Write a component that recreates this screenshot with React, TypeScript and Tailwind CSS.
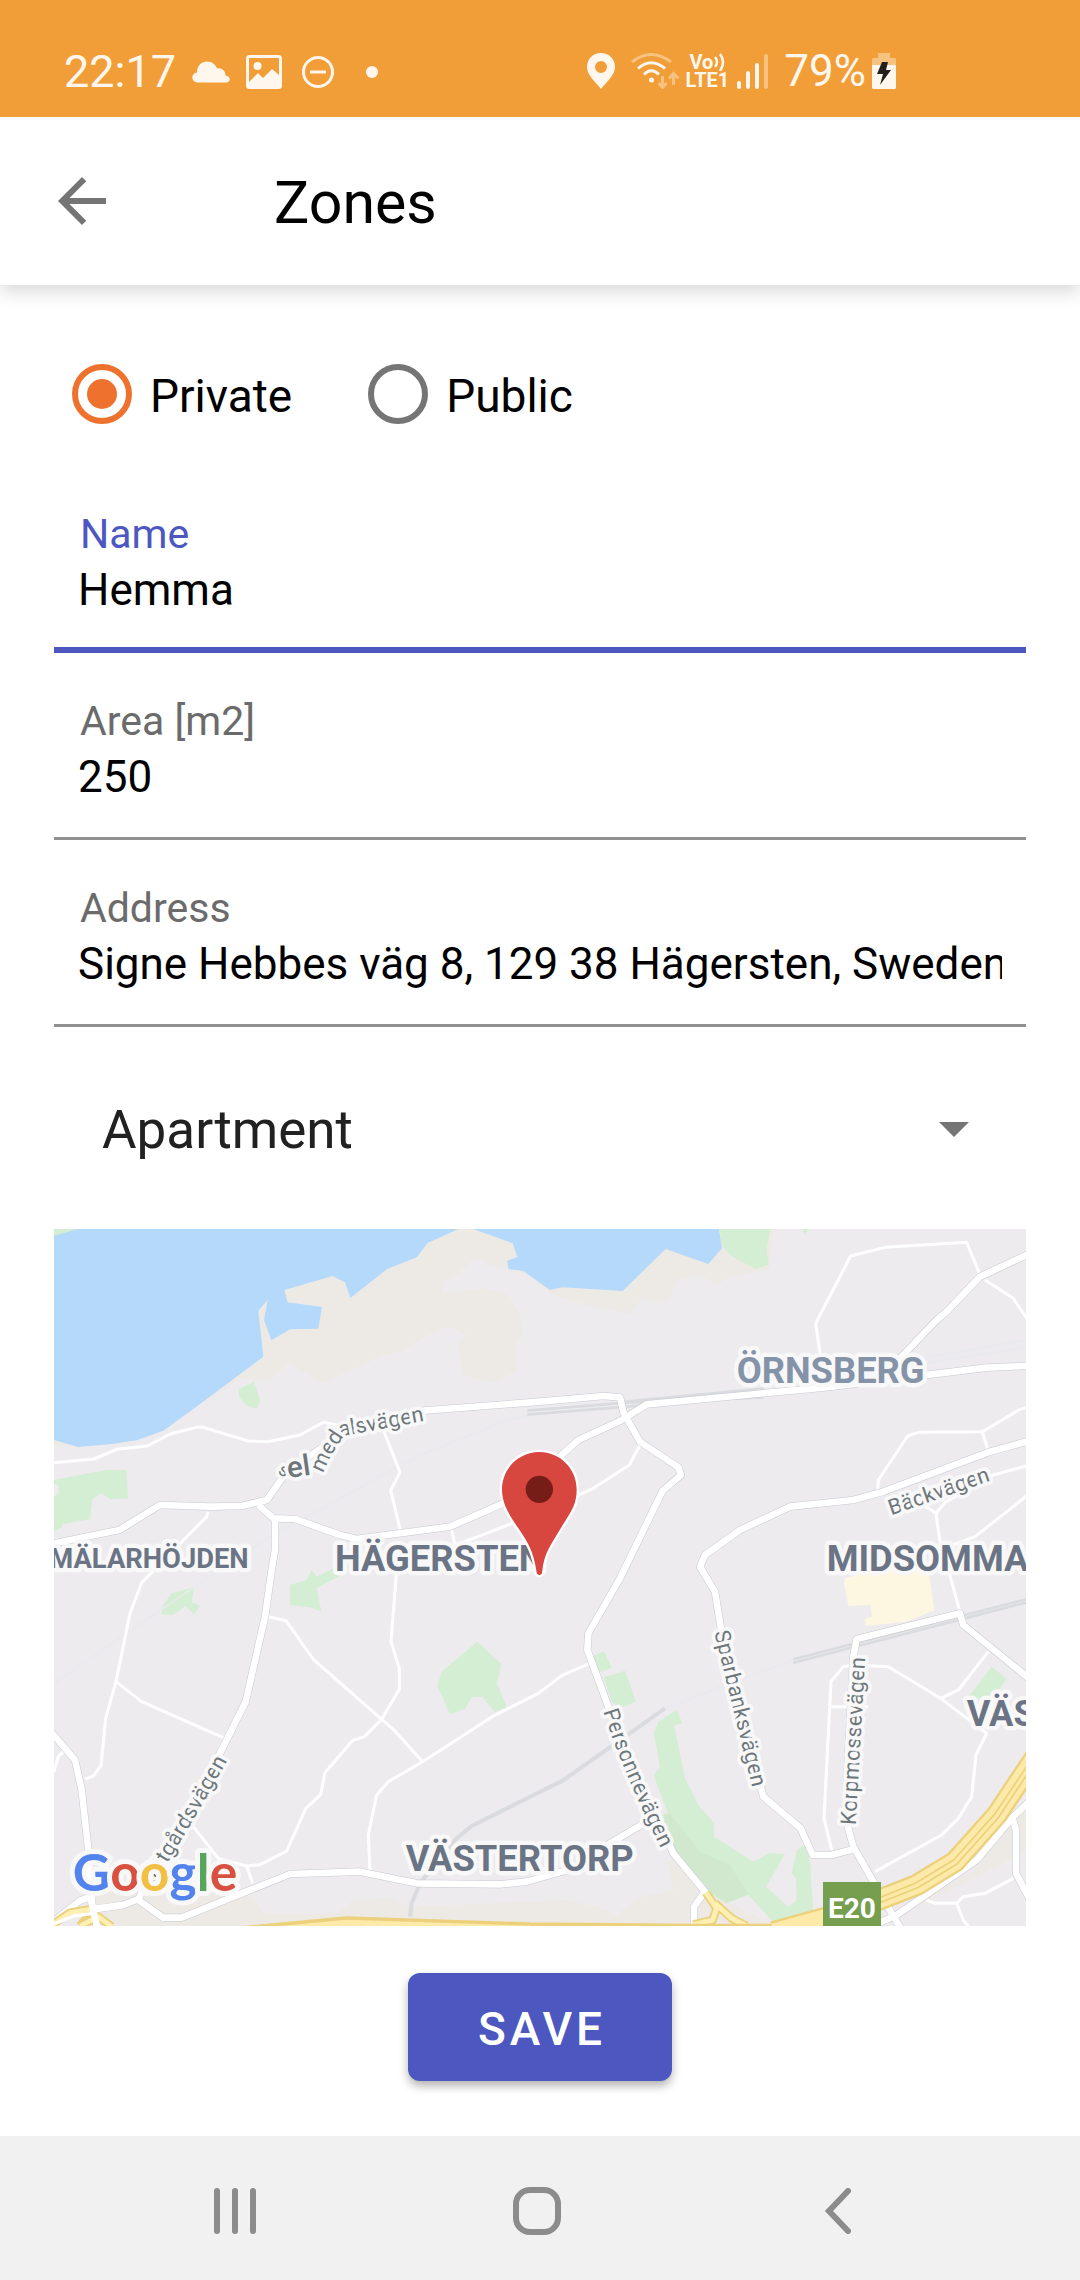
import { useState } from "react";
import type { ReactNode } from "react";

const MAJOR_ROADS = [
  "42,970 238,930 360,855 510,860 605,858 680,840 740,755 850,680 950,610 1150,572 1500,545 1690,528 1740,532 1750,575 1760,595",
  "655,855 700,895 765,897 900,945 950,957 1230,920 1390,850 1500,775 1565,705 1615,660 1740,603 1820,553 2350,503 2840,443 2970,437",
  "705,895 705,990 695,1050 675,1190 617,1445 540,1600 310,2005 295,2040 370,2093 425,2093 750,1962 960,1955 1130,1990 1380,1993 1460,1985 1590,1948 1710,1870 1820,1805",
  "1760,595 1800,665 1915,742 1923,765 1868,812 1740,1075 1645,1240 1642,1290 1705,1460 1900,1900 1995,2015 1962,2060 1962,2130",
  "30,1532 105,1620 125,1710 145,1890 155,2050 172,2130",
  "30,2112 120,2042 158,2028",
  "160,2068 250,2055 300,2035",
  "2970,100 2820,170 2720,275 2690,300 2575,420 2520,488",
  "2970,662 2850,695 2530,815 2440,840 2250,860 2100,930 1995,1005 1980,1040 2025,1115 2045,1240 2170,1730 2282,1825 2318,1905 2375,1905 2440,1888",
  "2970,1378 2770,1215 2760,1180 2450,1257 2440,1310 2415,1790 2440,1880 2520,2020 2585,2130",
  "2480,2125 2570,2085 2810,1920 2920,1790 2970,1742",
  "2915,1785 2928,1830 2928,1960 2970,2040",
];

const MINOR_ROADS = [
  "42,728 162,717 230,688 322,678 390,642 470,622 490,622 625,663 685,665 780,645 850,607 890,615",
  "1030,630 1080,757 1052,812 1082,935",
  "1235,930 1245,975 1300,955 1430,905",
  "505,875 500,890 305,1088 270,1180 228,1385 197,1495 183,1637 160,1668 135,1678",
  "228,1385 305,1445 555,1555",
  "685,1190 738,1202 820,1318 1025,1498 1060,1528 1148,1625",
  "1070,1050 1053,1265 1078,1345 1078,1408 1025,1498 973,1550 937,1562 855,1658 842,1724 797,1766 740,1893 660,1934 620,1938 535,1915 460,1820",
  "620,1938 638,1990",
  "1645,1332 1565,1367 1495,1420 1360,1488 1148,1625 1045,1685 1010,1725 985,1845 990,1955",
  "42,1655 55,1610 75,1590",
  "2340,400 2327,310 2432,108 2535,82 2780,67 2820,165",
  "2835,180 2920,235 2970,310",
  "2513,815 2515,780 2603,648 2635,637 2827,635 2940,568 2970,560",
  "2827,635 2845,695",
  "2620,835 2688,880 2702,980 2728,1060 2760,1175",
  "2688,880 2715,847 2860,765 2970,735",
  "2700,990 2805,950 2970,820",
  "1800,675 1768,735 1660,805 1600,832",
  "2375,1890 2352,1795 2373,1385 2410,1340 2440,1335 2545,1340 2702,1435 2840,1540 2808,1605 2795,1730 2755,1795 2705,1845 2505,1955",
  "2702,1435 2755,1410 2845,1295",
  "2370,1460 2485,1460",
  "2660,2040 2685,2050 2750,2050 2770,2030 2835,2020 2920,1975",
  "2750,2050 2770,2100 2790,2125",
];

const ROAD_LABELS = [
  { id: "slattgard", text: "Slättgårdsvägen", d: "M322 2024 Q438 1845 574 1600" },
  { id: "backvagen", text: "Bäckvägen", d: "M2554 886 L2880 772" },
  { id: "sparbank", text: "Sparbanksvägen", d: "M2023 1237 L2146 1740" },
  { id: "personne", text: "Personnevägen", d: "M1690 1474 Q1745 1650 1880 1920" },
  { id: "korpmosse", text: "Korpmossevägen", d: "M2447 1816 L2478 1270" },
  { id: "dalsvagen", text: "alsvägen", d: "M900 650 L1190 596" },
  { id: "selmed", text: "med", d: "M850 760 Q868 705 935 615" },
];

function RoadLabels() {
  return (
    <g fontSize="65" fill="#6d7679" stroke="#f8f8f9" strokeWidth="22" strokeLinejoin="round" paintOrder="stroke">
      {ROAD_LABELS.map((l) => (
        <g key={l.id}>
          <path id={l.id} d={l.d} fill="none" stroke="none" />
          <text>
            <textPath href={`#${l.id}`}>{l.text}</textPath>
          </text>
        </g>
      ))}
      <text fontSize="54" transform="translate(712 760) rotate(28)">s</text>
      <text fontSize="88" fontWeight="500" transform="translate(745 774) rotate(-8)">el</text>
    </g>
  );
}

function ZoneMap() {
  return (
    <svg
      role="img"
      aria-label="Map of Hägersten"
      viewBox="42 27 2916 2091"
      preserveAspectRatio="xMidYMid slice"
      className="block h-[697px] w-full bg-[#edebee]"
      fontFamily="Roboto, sans-serif"
    >
      <path
        fill="#edeae5"
        d="M480 552 L600 475 L690 480 L745 430 L850 490 L1030 405 L1080 395 L1200 325 L1240 325 L1278 345 L1252 380 L1270 465 L1350 488 L1428 455 L1430 370 L1448 340 L1440 280 L1405 225 L1330 205 L1205 220 L1210 185 L1250 165 L1305 115 L1350 135 L1405 147 L1470 168 L1530 222 L1650 258 L1770 283 L1810 230 L1860 252 L1890 235 L1910 182 L1980 165 L2030 195 L2060 175 L2186 148 L2200 27 L42 27 L42 675 L115 684 L370 632 Z"
      />
      <g fill="#b4d9fb">
        <path d="M42 660 L115 681 L210 673 L290 661 L370 632 L480 552 L670 410 L655 272 L683 240 L672 300 L694 361 L750 328 L835 326 L846 261 L743 247 L733 210 L878 168 L915 187 L931 234 L1040 148 L1130 112 L1163 69 L1255 27 L42 27 Z" />
        <path d="M1300 27 L1418 70 L1432 111 L1402 122 L1405 147 L1450 153 L1530 210 L1566 202 L1748 213 L1877 87 L2005 132 L2046 85 L2037 27 Z" />
      </g>
      <g fill="#edeae5">
        <path d="M150 2035 L230 2010 L330 2012 L640 2030 L670 2080 L890 2080 L940 2040 L1060 2035 L1110 2060 L1580 2040 L1670 2060 L1730 2085 L1790 2035 L1900 2010 L1885 1930 L1910 1890 L2070 2050 L2205 2118 L200 2118 Z" />
        <path d="M1860 1790 L1895 1755 L1900 1880 L1870 1860 Z" />
        <path d="M2970 1735 L2880 1850 L2800 1950 L2700 2010 L2570 2090 L2970 1890 Z" />
      </g>
      <g fill="#d3eed2">
        <path d="M42 27 L115 27 L42 47 Z" />
        <path d="M2037 27 L2190 27 L2180 90 L2186 134 L2146 147 L2070 105 L2046 75 Z" />
        <path d="M2287 27 L2305 27 L2295 43 Z" />
        <path d="M597 508 L642 485 L660 540 L650 567 L620 556 L597 530 Z" />
        <path d="M42 780 L200 750 L260 750 L264 835 L210 838 L185 820 L157 838 L150 898 L68 912 L66 922 L42 935 L42 832 L57 818 L55 795 L42 792 Z" />
        <path d="M370 1155 L395 1120 L462 1102 L455 1145 L480 1158 L462 1182 L436 1158 L400 1185 L363 1182 Z" />
        <path d="M750 1095 L800 1080 L815 1050 L830 1070 L880 1045 L915 1050 L895 1070 L830 1105 L844 1175 L810 1162 L750 1155 Z" />
        <path d="M1312 1265 L1384 1333 L1370 1390 L1400 1460 L1365 1477 L1327 1431 L1295 1431 L1275 1467 L1230 1482 L1192 1397 L1205 1355 Z" />
        <path d="M1660 1308 L1692 1294 L1716 1343 L1680 1356 Z" />
        <path d="M1692 1372 L1755 1352 L1788 1445 L1740 1465 L1715 1445 Z" />
        <path d="M1910 1470 L1927 1510 L1902 1515 L1935 1675 L1975 1755 L2022 1810 L2022 1850 L2140 1925 L2188 1900 L2235 1903 L2178 2000 L2245 2060 L2270 2040 L2268 1975 L2255 1960 L2270 1890 L2295 1875 L2310 1925 L2320 2080 L2235 2106 L2205 2112 L2125 2025 L2060 2050 L1990 2010 L1900 1890 L1865 1785 L1885 1780 L1855 1705 L1842 1665 L1860 1640 L1842 1540 L1855 1505 Z" />
        <path d="M2855 1340 L2900 1377 L2855 1440 L2785 1432 Z" />
      </g>
      <path fill="#d1e8cf" d="M1870 1785 L1890 1782 L1980 1895 L2070 1935 L2125 2022 L2060 2048 L1995 2005 L1905 1890 Z" />
      <path
        fill="#fdf6e0"
        d="M2415 1075 L2500 1050 L2620 1010 L2666 1050 L2683 1170 L2600 1205 L2478 1218 L2473 1198 L2495 1190 L2492 1155 L2425 1158 L2412 1090 Z"
      />

      <g fill="none" stroke="#e8eaee" strokeWidth="5">
        <path d="M42 1390 L500 1075 L700 945 L1130 710 L1400 600 L1500 580" />
        <path d="M1880 1465 L2040 1400 L2260 1320" />
        <path d="M2560 430 L2958 360 M2640 432 L2958 382" />
      </g>
      <g fill="none" stroke="#d9dbde">
        <path strokeWidth="8" d="M1462 572 L1760 548 L2170 532 M1462 584 L1760 560 L2000 540 M1740 546 L2170 506" />
        <path strokeWidth="12" d="M1110 2090 L1115 2050 L1140 1990 L1245 1860 L1295 1818 L1470 1730 L1568 1682 L1875 1465" />
        <path strokeWidth="8" d="M2260 1318 L2958 1138 M2260 1328 L2958 1148" />
      </g>

      <g fill="none" strokeLinejoin="round" stroke="#fff" strokeWidth="9">
        {MINOR_ROADS.map((p) => (
          <polyline key={p} points={p} />
        ))}
      </g>
      <g fill="none" strokeLinejoin="round" stroke="#c6c8d0" strokeWidth="23">
        {MAJOR_ROADS.map((p) => (
          <polyline key={p} points={p} />
        ))}
      </g>
      <g fill="none" strokeLinejoin="round" stroke="#fff" strokeWidth="20">
        {MAJOR_ROADS.map((p) => (
          <polyline key={p} points={p} />
        ))}
      </g>

      <g fill="none" strokeLinejoin="round">
        <path stroke="#ecd07c" strokeWidth="26" d="M1998 2018 L2030 2065 L2018 2100 L1960 2114 M2025 2050 L2075 2095 L2120 2118" />
        <path stroke="#feefb3" strokeWidth="15" d="M1998 2018 L2030 2065 L2018 2100 L1960 2114 M2025 2050 L2075 2095 L2120 2118" />
        <path stroke="#ecd07c" strokeWidth="34" d="M600 2136 L920 2106 L1470 2124 L1960 2128 L2210 2128" />
        <path stroke="#fdeaa8" strokeWidth="20" d="M600 2140 L920 2109 L1470 2127 L1960 2131 L2210 2131" />
        <path stroke="#ecd07c" strokeWidth="66" d="M3000 1590 L2870 1785 L2745 1925 L2630 1995 L2510 2042 L2350 2095 L2200 2136" />
        <path stroke="#fdeaa8" strokeWidth="52" d="M3000 1590 L2870 1785 L2745 1925 L2630 1995 L2510 2042 L2350 2095 L2200 2136" />
        <path stroke="#ecd07c" strokeWidth="5" d="M3000 1580 L2866 1780 L2741 1920 L2626 1990 L2510 2036 M3000 1604 L2876 1792 L2751 1932 L2636 2002 L2510 2052" />
        <path stroke="#ecd07c" strokeWidth="26" d="M30 2118 L90 2078 L150 2068 M120 2118 L175 2090 L215 2120 M120 2118 L135 2100 L165 2096" />
        <path stroke="#feefb3" strokeWidth="14" d="M30 2118 L90 2078 L150 2068 M120 2118 L175 2090 L215 2120" />
        <path stroke="#fff" strokeWidth="10" d="M42 2112 L100 2088 L160 2080" />
        <path stroke="#fff" strokeWidth="20" d="M150 1990 L157 2060 L174 2130 M150 2068 L250 2055" />
      </g>

      <RoadLabels />

      <g fontWeight="700" fill="#6b7485" stroke="#f8f8f9" strokeWidth="26" strokeLinejoin="round" paintOrder="stroke" fontSize="109">
        <text x="2090" y="490" fill="#8493a8">ÖRNSBERG</text>
        <text x="885" y="1053">HÄGERSTEN</text>
        <text x="2360" y="1053">MIDSOMMA</text>
        <text x="1097" y="1953">VÄSTERTORP</text>
        <text x="2780" y="1517">VÄS</text>
        <text x="28" y="1043" fontSize="82">MÄLARHÖJDEN</text>
      </g>

      <rect x="2349" y="1986" width="174" height="140" fill="#769e4f" />
      <text x="2436" y="2093" textAnchor="middle" fontSize="84" fontWeight="700" fill="#fff">E20</text>

      <path
        fill="#d8473f"
        stroke="#fff"
        strokeWidth="14"
        paintOrder="stroke"
        d="M1498 696 C1436 696 1386 746 1386 808 C1386 850 1405 880 1435 925 C1470 975 1482 1005 1489 1052 Q1490 1065 1498 1065 Q1506 1065 1507 1052 C1512 1000 1532 975 1565 920 C1598 870 1610 850 1610 808 C1610 746 1560 696 1498 696 Z"
      />
      <circle cx="1498" cy="808" r="41" fill="#761d17" />

      <text
        x="98"
        y="2013"
        fontFamily="Lato, sans-serif"
        fontWeight="700"
        fontSize="155"
        stroke="#f8f8f9"
        strokeWidth="30"
        strokeLinejoin="round"
        paintOrder="stroke"
      >
        <tspan fill="#5383ec">G</tspan>
        <tspan fill="#d85140">o</tspan>
        <tspan fill="#f1bf42">o</tspan>
        <tspan fill="#5383ec">g</tspan>
        <tspan fill="#58a55c">l</tspan>
        <tspan fill="#d85140">e</tspan>
      </text>
    </svg>
  );
}

function StatusBar() {
  return (
    <div className="relative z-10 flex h-[117px] items-end bg-[#f19e38] px-16 pb-7 text-[#fff7ee]">
      <div className="flex flex-1 items-center">
        <span className="text-[45px] leading-[34px]">22:17</span>
        <svg viewBox="0 0 38 22" className="ml-4 h-[22px] w-[38px]" fill="currentColor" aria-hidden="true">
          <path d="M5 21.500 C-1.500 20.500 -1 12 5 11.500 C5 4 10 .5 15 .5 C20 .5 23.500 3.500 25 7.500 C30 6.500 33.500 10 33.500 14.500 C39 15 39 21.500 34 21.500 Z" />
        </svg>
        <svg viewBox="0 0 36 34" className="ml-4 h-[34px] w-9" aria-hidden="true">
          <rect x="1.500" y="1.500" width="33" height="31" rx="2" fill="none" stroke="currentColor" strokeWidth="3" />
          <circle cx="11.500" cy="11" r="4" fill="currentColor" />
          <path d="M3 27 L12 18 L17 23 L26 14 L33 20 V32 H3 Z" fill="currentColor" />
        </svg>
        <svg viewBox="0 0 32 32" className="ml-5 size-8" fill="none" stroke="currentColor" strokeWidth="3" aria-hidden="true">
          <circle cx="16" cy="16" r="14.500" />
          <path d="M8 16 H24" />
        </svg>
        <span className="ml-8 size-3 rounded-full bg-current" />
      </div>
      <div className="mr-[120px] flex items-center">
        <svg viewBox="0 0 28 36" className="h-9 w-7" fill="currentColor" aria-hidden="true">
          <path fillRule="evenodd" d="M14 0 C6 0 0 6 0 14 C0 22 7 27 14 36 C21 27 28 22 28 14 C28 6 22 0 14 0 Z M14 8 A6 6 0 1 1 14 20 A6 6 0 1 1 14 8 Z" />
        </svg>
        <svg viewBox="0 0 49 36" className="ml-4 h-9 w-[49px]" fill="none" stroke="currentColor" strokeWidth="3" aria-hidden="true">
          <path d="M1 9 Q20 -6 40 9" opacity=".4" />
          <path d="M7 15.500 Q20 4 34 15.500" />
          <path d="M13 21.500 Q20 14 28 21.500" />
          <circle cx="20.500" cy="27" r="2.500" fill="currentColor" stroke="none" />
          <path d="M31.500 23 V34 M27.500 30 L31.500 34.500 L35.500 30 M42.500 32 V21 M38 25.500 L42.500 20.500 L47.500 25.500" opacity=".4" />
        </svg>
        <span className="ml-1.5 flex flex-col items-center text-[20px] leading-[18px] font-bold">
          <span className="flex items-center">
            Vo
            <svg viewBox="0 0 12 18" className="h-[18px] w-3" fill="none" stroke="currentColor" strokeWidth="2.500" aria-hidden="true">
              <path d="M2 4 Q6 9 2 14 M7 1 Q13 9 7 18" />
            </svg>
          </span>
          <span>LTE1</span>
        </span>
        <svg viewBox="0 0 31 35" className="ml-2 h-[35px] w-[31px]" fill="none" stroke="currentColor" strokeWidth="4" strokeLinecap="round" aria-hidden="true">
          <path d="M2 29 V33 M11 19 V33 M20 11 V33" />
          <path d="M29 2 V33" opacity=".4" />
        </svg>
        <span className="ml-4 text-[44px] leading-[34px]">79%</span>
        <svg viewBox="0 0 24 36" className="ml-1.5 h-9 w-6" fill="currentColor" aria-hidden="true">
          <path d="M6 0 H18 V5 H23 L24 6 V12 H0 V6 L1 5 H6 Z" opacity=".4" />
          <path d="M0 12 H24 V35 L23 36 H1 L0 35 Z" />
          <path d="M10 9 H16 L14 17 H19 L8 32 L11 21 H5 Z" fill="#231f1a" />
        </svg>
      </div>
    </div>
  );
}

function Radio({ label, checked, onChange }: { label: string; checked: boolean; onChange: () => void }) {
  return (
    <label className="flex h-[60px] items-center gap-[18px] text-[46px] leading-[60px]">
      <input
        type="radio"
        name="visibility"
        checked={checked}
        onChange={onChange}
        className="size-[60px] appearance-none rounded-full border-6 border-[#757575] bg-clip-content p-[9px] checked:border-[#ee722e] checked:bg-[#ee722e]"
      />
      <span className="pt-1">{label}</span>
    </label>
  );
}

function Field({ id, label, defaultValue, active = false }: { id: string; label: string; defaultValue: string; active?: boolean }) {
  return (
    <div
      className={
        active
          ? "flex h-[187px] flex-col border-b-6 border-[#4c57bf] px-6 pt-[42px] text-[#4c57bf]"
          : "flex h-[187px] flex-col border-b-3 border-[#919191] px-6 pt-[42px] text-[#6b6b6b]"
      }
    >
      <label htmlFor={id} className="pl-0.5 text-[41px] leading-[52px]">
        {label}
      </label>
      <input id={id} defaultValue={defaultValue} className="h-[60px] w-full bg-transparent text-[44px] leading-[60px] text-black outline-none" />
    </div>
  );
}

function NavButton({ label, children }: { label: string; children: ReactNode }) {
  return (
    <button type="button" aria-label={label} className="grid h-full w-[120px] place-items-center">
      {children}
    </button>
  );
}

export default function App() {
  const [visibility, setVisibility] = useState("private");

  return (
    <div className="flex min-h-screen flex-col bg-white font-[Roboto,sans-serif] text-black">
      <StatusBar />
      <header className="flex h-[168px] items-center bg-white pl-[46px] shadow-[0_6px_18px_rgba(0,0,0,0.16)]">
        <button type="button" aria-label="Back">
          <svg viewBox="0 0 24 24" className="size-[72px]" fill="#757575" aria-hidden="true">
            <path d="M20 11H7.830l5.590-5.590L12 4l-8 8 8 8 1.410-1.410L7.830 13H20v-2z" />
          </svg>
        </button>
        <h1 className="ml-[156px] pt-1 text-[59px] leading-[72px]">Zones</h1>
      </header>

      <main className="flex flex-1 flex-col px-[54px] pt-[79px]">
        <fieldset className="flex gap-[76px] pl-[18px]">
          <legend className="sr-only">Visibility</legend>
          <Radio label="Private" checked={visibility === "private"} onChange={() => setVisibility("private")} />
          <Radio label="Public" checked={visibility === "public"} onChange={() => setVisibility("public")} />
        </fieldset>

        <div className="mt-[42px]">
          <Field id="name" label="Name" defaultValue="Hemma" active />
          <Field id="area" label="Area [m2]" defaultValue="250" />
          <Field id="address" label="Address" defaultValue="Signe Hebbes väg 8, 129 38 Hägersten, Sweden" />
        </div>

        <div className="relative mt-[55px] mb-[51px] h-24">
          <select
            aria-label="Home type"
            defaultValue="Apartment"
            className="size-full appearance-none bg-transparent px-12 text-[53px] leading-[72px] text-[#212121] outline-none"
          >
            <option>Apartment</option>
            <option>House</option>
          </select>
          <svg viewBox="0 0 30 15" className="pointer-events-none absolute top-10 right-[57px] h-[15px] w-[30px]" fill="#757575" aria-hidden="true">
            <path d="M0 0 H30 L15 15 Z" />
          </svg>
        </div>

        <ZoneMap />

        <button
          type="button"
          className="mt-[47px] mb-[55px] h-[108px] w-[264px] self-center rounded-xl bg-[#4c57bf] pt-1 pl-1 text-[46px] font-medium tracking-[4px] text-white shadow-[0_5px_10px_rgba(0,0,0,0.3)]"
        >
          SAVE
        </button>
      </main>

      <nav className="flex h-36 items-center justify-between bg-[#f1f1f1] pt-1.5 pr-[182px] pl-[175px]">
        <NavButton label="Recent apps">
          <svg viewBox="0 0 42 46" className="h-[46px] w-[42px]" stroke="#8c8c8c" strokeWidth="6" strokeLinecap="round" aria-hidden="true">
            <path d="M3 3 V43 M21 3 V43 M39 3 V43" />
          </svg>
        </NavButton>
        <NavButton label="Home">
          <svg viewBox="0 0 48 48" className="size-12" fill="none" stroke="#8c8c8c" strokeWidth="6" aria-hidden="true">
            <rect x="3" y="3" width="42" height="42" rx="14" />
          </svg>
        </NavButton>
        <NavButton label="Back">
          <svg viewBox="0 0 28 46" className="h-[46px] w-7" fill="none" stroke="#8c8c8c" strokeWidth="6" strokeLinecap="round" aria-hidden="true">
            <path d="M24 3 L5 23 L24 43" />
          </svg>
        </NavButton>
      </nav>
    </div>
  );
}
